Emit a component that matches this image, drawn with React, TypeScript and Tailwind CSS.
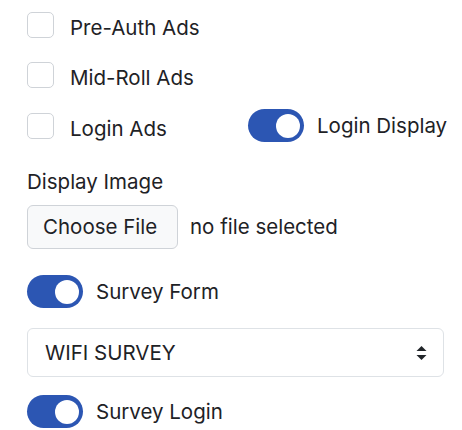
import React from 'react';

function Checkbox({ label }: { label: string }) {
  return (
    <label className="flex items-center gap-[16px] whitespace-nowrap h-[26px]">
      <span className="w-[27px] h-[26px] rounded-[5px] border border-[#cfd3d8] bg-white shrink-0" />
      <span className="translate-y-[3px]">{label}</span>
    </label>
  );
}

function Toggle({ label }: { label: string }) {
  return (
    <label className="flex items-center gap-[13px] whitespace-nowrap">
      <span className="w-[56px] h-[33px] rounded-full bg-[#2c56b3] flex items-center justify-end pr-[4px] shrink-0">
        <span className="w-[24px] h-[24px] rounded-full bg-white" />
      </span>
      <span>{label}</span>
    </label>
  );
}

export default function App() {
  return (
    <div className="pl-[27px] pt-[12px] pr-[18px] font-['Inter',sans-serif] text-[20.5px] leading-[24px] text-[#1e2226] bg-white min-h-[430px]">
      <Checkbox label="Pre-Auth Ads" />
      <div className="mt-[24px]">
        <Checkbox label="Mid-Roll Ads" />
      </div>
      <div className="mt-[21px] h-[33px] flex items-center">
        <div className="w-[221px] shrink-0">
          <Checkbox label="Login Ads" />
        </div>
        <Toggle label="Login Display" />
      </div>

      <div className="mt-[28px]">Display Image</div>
      <div className="mt-[11px] flex items-center gap-[12px] whitespace-nowrap">
        <span className="h-[44px] w-[151px] pl-[15px] flex items-center rounded-[6px] border border-[#cfd3d8] bg-[#f8f9fa]">
          Choose File
        </span>
        <span>no file selected</span>
      </div>

      <div className="mt-[26px]">
        <Toggle label="Survey Form" />
      </div>

      <div className="mt-[20px] h-[49px] rounded-[6px] border border-[#dee2e6] flex items-center justify-between pl-[17px] pr-[16px]">
        <span>WIFI SURVEY</span>
        <svg width="11" height="14" viewBox="0 0 11 14" fill="#212529">
          <path d="M5.5 0 L10.5 5 L0.5 5 Z" />
          <path d="M0.5 9 L10.5 9 L5.5 14 Z" />
        </svg>
      </div>

      <div className="mt-[18px]">
        <Toggle label="Survey Login" />
      </div>
    </div>
  );
}
